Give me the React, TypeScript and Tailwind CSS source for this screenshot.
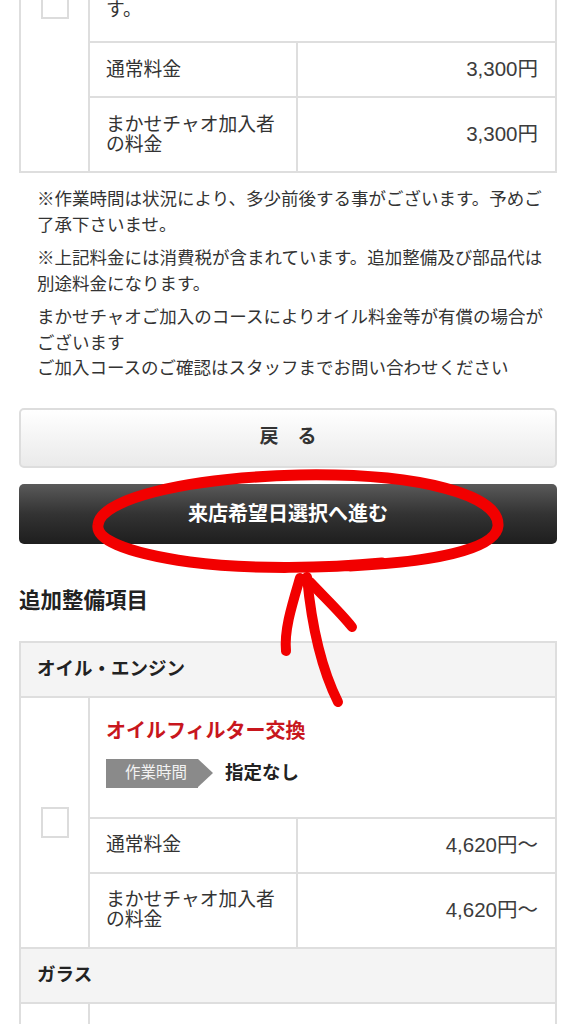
import * as React from 'react';

const FONT = '"Liberation Sans", "Noto Sans CJK JP", sans-serif';

interface PriceRowsProps {
  normal: string;
  member: string;
}

function PriceRows({ normal, member }: PriceRowsProps) {
  return (
    <div className="text-[#333]">
      <div className="flex h-[55px] border-t-2 border-[#dedede]">
        <div className="flex w-[208px] shrink-0 items-center border-r-2 border-[#dedede] px-[16px] text-[18.8px] leading-[20px]">
          通常料金
        </div>
        <div className="flex flex-1 items-center justify-end px-[17px] text-[20.5px] text-[#3c3c3c]">{normal}</div>
      </div>
      <div className="flex h-[75px] border-t-2 border-[#dedede]">
        <div className="flex w-[208px] shrink-0 items-center border-r-2 border-[#dedede] px-[16px] text-[18.8px] leading-[20px]">
          まかせチャオ加入者の料金
        </div>
        <div className="flex flex-1 items-center justify-end px-[17px] text-[20.5px] text-[#3c3c3c]">{member}</div>
      </div>
    </div>
  );
}

function Checkbox() {
  return <div className="h-[31px] w-[28px] border-2 border-[#dcdcdc] bg-white" />;
}

function ItemRow({ children, prices }: { children: React.ReactNode; prices: PriceRowsProps }) {
  return (
    <div className="flex">
      <div className="flex w-[69px] shrink-0 items-center justify-center border-r-2 border-[#dedede]">
        <Checkbox />
      </div>
      <div className="flex-1">
        {children}
        <PriceRows {...prices} />
      </div>
    </div>
  );
}

function TimeTag() {
  return (
    <div className="mt-[15px] flex h-[29px] items-center">
      <div className="flex h-[29px] items-center bg-[#8a8a8a] pl-[19px] pr-[11px] text-[15.5px] leading-none text-[#f2f2f2]">
        作業時間
      </div>
      <div className="h-0 w-0 border-y-[14.5px] border-l-[15px] border-y-transparent border-l-[#8a8a8a]" />
      <div className="ml-[12px] text-[18.5px] font-bold leading-none text-[#222]">指定なし</div>
    </div>
  );
}

function Annotation() {
  return (
    <svg
      className="pointer-events-none absolute left-0 top-0"
      width="576"
      height="1024"
      viewBox="0 0 576 1024"
      fill="none"
      stroke="#f20000"
      strokeLinecap="round"
      strokeLinejoin="round"
    >
      <path
        d="M382 563 C 330 568, 250 570, 190 562 C 120 552, 96 538, 98 525 C 100 500, 180 478, 300 475 C 420 473, 500 495, 498 526 C 496 550, 430 562, 350 566"
        strokeWidth="11"
      />
      <path d="M338 702 C 322 670, 312 630, 307 577" strokeWidth="10" />
      <path d="M300 578 C 292 605, 284 630, 286 651" strokeWidth="10" />
      <path d="M310 582 C 325 598, 340 612, 352 627" strokeWidth="10" />
    </svg>
  );
}

export default function App() {
  return (
    <div className="relative h-[1024px] w-[576px] overflow-hidden bg-white" style={{ fontFamily: FONT }}>
      <div className="px-[19px]">
        {/* 上の整備項目（途中から） */}
        <div className="-mt-[166px] border-2 border-[#dedede]">
          <ItemRow prices={{ normal: '3,300円', member: '3,300円' }}>
            <div className="flex h-[205px] flex-col justify-end px-[16px] pb-[18px] text-[18.8px] leading-[26px] text-[#333]">
              す。
            </div>
          </ItemRow>
        </div>

        {/* 注意書き */}
        <div className="mt-[14px] pl-[18px] pr-[4px] text-[17.5px] leading-[25.5px] text-[#333]">
          <p>※作業時間は状況により、多少前後する事がございます。予めご了承下さいませ。</p>
          <p className="mt-[8px]">
            ※上記料金には消費税が含まれています。追加整備及び部品代は別途料金になります。
          </p>
          <p className="mt-[8px]">
            まかせチャオご加入のコースによりオイル料金等が有償の場合がございます
            <br />
            ご加入コースのご確認はスタッフまでお問い合わせください
          </p>
        </div>

        {/* ボタン */}
        <button
          type="button"
          className="mt-[26px] flex h-[60px] w-full items-center justify-center rounded-[5px] border-2 border-[#dddddd] bg-gradient-to-b from-[#ffffff] to-[#eaeaea] text-[19px] font-bold text-[#333]"
        >
          戻　る
        </button>
        <button
          type="button"
          className="mt-[16px] flex h-[60px] w-full items-center justify-center rounded-[5px] bg-gradient-to-b from-[#5a5a5a] via-[#333333] to-[#1e1e1e] text-[20px] font-bold text-white"
        >
          来店希望日選択へ進む
        </button>

        <h2 className="mt-[42px] text-[21.5px] font-bold leading-[30px] text-[#222]">追加整備項目</h2>

        {/* 追加整備テーブル */}
        <div className="mt-[25px] border-2 border-[#dedede]">
          <div className="flex h-[53px] items-center bg-[#f4f4f4] px-[16px] text-[18.5px] font-bold text-[#222]">
            オイル・エンジン
          </div>
          <div className="border-t-2 border-[#dedede]">
            <ItemRow prices={{ normal: '4,620円〜', member: '4,620円〜' }}>
              <div className="px-[16px] pb-[29px] pt-[20px]">
                <div className="text-[20px] font-bold leading-[26px] text-[#c8161d]">オイルフィルター交換</div>
                <TimeTag />
              </div>
            </ItemRow>
          </div>
          <div className="flex h-[55px] items-center border-t-2 border-[#dedede] bg-[#f4f4f4] px-[16px] text-[18.5px] font-bold text-[#222]">
            ガラス
          </div>
          <div className="flex h-[60px] border-t-2 border-[#dedede]">
            <div className="w-[69px] shrink-0 border-r-2 border-[#dedede]" />
            <div className="flex-1" />
          </div>
        </div>
      </div>

      <Annotation />
    </div>
  );
}
